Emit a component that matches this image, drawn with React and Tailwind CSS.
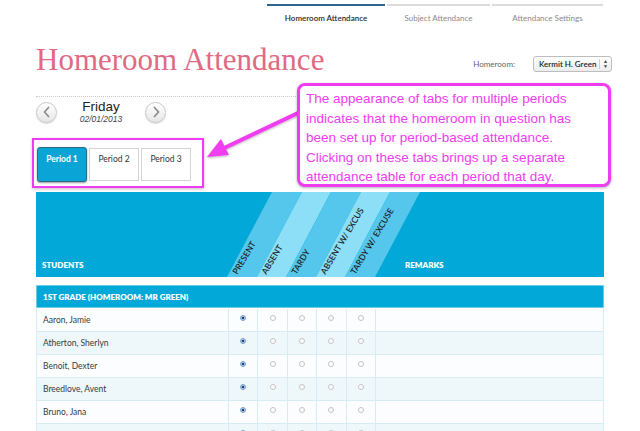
import React from 'react';

const students = [
  'Aaron, Jamie',
  'Atherton, Sherlyn',
  'Benoit, Dexter',
  'Breedlove, Avent',
  'Bruno, Jana',
  '',
];

const columns = ['PRESENT', 'ABSENT', 'TARDY', 'ABSENT W/ EXCUS', 'TARDY W/ EXCUSE'];

const Radio = ({ on }) => (
  <span
    className={
      on
        ? 'block h-[6px] w-[6px] rounded-full border border-[#7a9fc4] bg-[radial-gradient(circle,#1c3f78_30%,#a9c6e6_45%)]'
        : 'block h-[6px] w-[6px] rounded-full border border-[#c4c4c4] bg-white'
    }
  />
);

const Chevron = ({ dir }) => (
  <svg width="10" height="12" viewBox="0 0 10 12">
    <path
      d={dir === 'left' ? 'M7 1 L2.5 6 L7 11' : 'M3 1 L7.5 6 L3 11'}
      fill="none"
      stroke="#8a8a8a"
      strokeWidth="1.6"
    />
  </svg>
);

const CircleBtn = ({ dir }) => (
  <button className="flex h-[21px] w-[21px] items-center justify-center rounded-full border border-[#c8c8c8] bg-gradient-to-b from-white to-[#e6e6e6] shadow-[0_1px_1px_rgba(0,0,0,0.15)]">
    <Chevron dir={dir} />
  </button>
);

const App = () => {
  return (
    <div className="relative h-[431px] w-[640px] overflow-hidden bg-white font-['Lato',sans-serif] text-[#333]">
      {/* Top navigation */}
      <nav className="flex justify-end gap-[2px] pr-[37px] pt-[4px]">
        <div className="w-[118px] border-t-2 border-[#2c6592] pt-[6px] text-center text-[8px] font-semibold text-[#2b2b2b]">
          Homeroom Attendance
        </div>
        <div className="w-[103px] border-t-2 border-[#dcdcdc] pt-[6px] text-center text-[8px] text-[#8a8a8a]">
          Subject Attendance
        </div>
        <div className="w-[111px] border-t-2 border-[#dcdcdc] pt-[6px] text-center text-[8px] text-[#8a8a8a]">
          Attendance Settings
        </div>
      </nav>

      {/* Title row */}
      <div className="mx-[36px] mt-[21px] flex items-end justify-between border-b border-dotted border-[#c9c9c9] pb-[21px]">
        <h1 className="font-['Liberation_Serif',serif] text-[31px] leading-[30px] text-[#e06a82]">
          Homeroom Attendance
        </h1>
        <div className="mr-[-8px] flex items-center gap-[18px] pb-[3px]">
          <span className="text-[8px] text-[#666]">Homeroom:</span>
          <div className="flex h-[16px] w-[79px] items-center justify-between rounded-[3px] border border-[#bdbdbd] bg-gradient-to-b from-white to-[#ececec] pl-[5px] pr-[3px] text-[8px] font-semibold text-[#222]">
            <span>Kermit H. Green</span>
            <span className="flex h-[10px] flex-col items-center justify-center border-l border-[#d0d0d0] pl-[3px] text-[5px] leading-[5px] text-[#444]">
              <span>▲</span>
              <span>▼</span>
            </span>
          </div>
        </div>
      </div>

      {/* Date navigation */}
      <div className="ml-[36px] mt-[3px] flex items-center">
        <CircleBtn dir="left" />
        <div className="w-[88px] text-center">
          <div className="font-['Liberation_Sans',sans-serif] text-[13.5px] leading-[14px] text-[#222]">Friday</div>
          <div className="font-['Liberation_Sans',sans-serif] text-[8.5px] italic leading-[10px] text-[#444]">02/01/2013</div>
        </div>
        <CircleBtn dir="right" />
      </div>

      {/* Period tabs (annotated) */}
      <div className="ml-[32px] mt-[14px] flex h-[50px] w-[172px] items-start gap-[2px] border-2 border-[#f03cf0] pl-[3px] pt-[7px] shadow-[0_1px_3px_rgba(0,0,0,0.25)]">
        <div className="h-[35px] w-[50px] rounded-[3px] border border-[#2f6b82] bg-[#0aa5d6] pt-[5px] text-center text-[8.5px] font-bold text-white shadow-[0_1px_2px_rgba(0,0,0,0.4)]">
          Period 1
        </div>
        <div className="mt-[1px] h-[33px] w-[50px] border border-[#d4d4d4] bg-white pt-[4px] text-center text-[8.5px] text-[#333]">
          Period 2
        </div>
        <div className="mt-[1px] h-[33px] w-[50px] border border-[#d4d4d4] bg-white pt-[4px] text-center text-[8.5px] text-[#333]">
          Period 3
        </div>
      </div>

      {/* Table header */}
      <div className="relative mx-[36px] mt-[4px] h-[85px] overflow-hidden bg-[#02a8d8]">
        <svg className="absolute inset-0" width="567" height="85" viewBox="0 0 567 85">
          <polygon points="191,85 221,85 266,0 236,0" fill="#55c7ec" />
          <polygon points="221,85 250,85 295,0 266,0" fill="#8ddff8" />
          <polygon points="250,85 280,85 325,0 295,0" fill="#55c7ec" />
          <polygon points="280,85 309,85 354,0 325,0" fill="#8ddff8" />
          <polygon points="309,85 339,85 384,0 354,0" fill="#55c7ec" />
        </svg>
        <div className="relative grid h-full grid-cols-[191px_repeat(5,29.4px)_1fr] items-end">
          <div className="pb-[6px] pl-[6px] text-[8px] font-extrabold text-white">STUDENTS</div>
          {columns.map((c) => (
            <div key={c} className="relative h-full">
              <span className="absolute bottom-[1px] left-[12px] origin-bottom-left -rotate-[59deg] whitespace-nowrap text-[8.5px] font-semibold leading-[9px] text-[#1c1c1c]">
                {c}
              </span>
            </div>
          ))}
          <div className="pb-[6px] pl-[31px] text-[8px] font-extrabold text-white">REMARKS</div>
        </div>
      </div>

      {/* Group bar */}
      <div className="mx-[36px] mt-[8px] flex h-[23px] items-center border border-[#6fcbea] bg-[#02a8d8] pl-[6px] text-[8px] font-extrabold text-white">
        1ST GRADE (HOMEROOM: MR GREEN)
      </div>

      {/* Rows */}
      <div className="mx-[36px] mt-[1px] border-x border-[#d8eef6]">
        {students.map((s, i) => (
          <div
            key={i}
            className={
              'grid h-[23px] grid-cols-[191px_repeat(5,29.4px)_1fr] border-b border-[#d6edf6] ' +
              (i % 2 === 0 ? 'bg-[#fbfdfe]' : 'bg-[#eef7fa]')
            }
          >
            <div className="flex items-center pl-[6px] text-[8.5px] text-[#3a3a3a]">{s}</div>
            {columns.map((c, j) => (
              <div key={c} className="flex justify-center border-l border-[#d6edf6] pt-[6px]">
                <Radio on={j === 0} />
              </div>
            ))}
            <div className="border-l border-[#d6edf6]" />
          </div>
        ))}
      </div>

      {/* Annotation arrow */}
      <svg className="absolute left-[200px] top-[100px]" width="110" height="70" viewBox="0 0 110 70">
        <defs>
          <filter id="sh" x="-20%" y="-20%" width="140%" height="140%">
            <feDropShadow dx="0" dy="1" stdDeviation="1" floodColor="#000" floodOpacity="0.3" />
          </filter>
        </defs>
        <g filter="url(#sh)">
          <line x1="98" y1="13" x2="20" y2="50" stroke="#f03cf0" strokeWidth="4" strokeLinecap="round" />
          <polygon points="7,57 21,39 29,55" fill="#f03cf0" />
        </g>
      </svg>

      {/* Annotation callout */}
      <div className="absolute left-[297px] top-[83px] h-[104px] w-[314px] rounded-[8px] border-[3px] border-[#f03cf0] bg-white pl-[6px] pt-[3px] font-['Liberation_Sans',sans-serif] text-[13.5px] leading-[19.5px] text-[#f03cf0] shadow-[0_1px_3px_rgba(0,0,0,0.3)]">
        The appearance of tabs for multiple periods
        <br />
        indicates that the homeroom in question has
        <br />
        been set up for period-based attendance.
        <br />
        Clicking on these tabs brings up a separate
        <br />
        attendance table for each period that day.
      </div>
    </div>
  );
};

export default App;
